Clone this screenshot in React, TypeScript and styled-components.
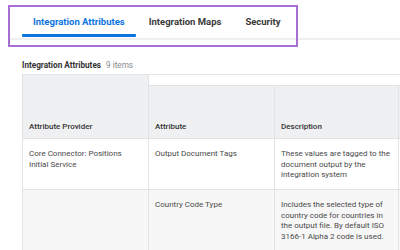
import { createGlobalStyle, styled } from "styled-components";

const GlobalStyle = createGlobalStyle`
  html, body {
    margin: 0;
    padding: 0;
    background: #ffffff;
    font-family: Roboto, "Liberation Sans", Arial, sans-serif;
  }
`;

const Page = styled.div`
  position: relative;
  width: 400px;
  height: 250px;
  overflow: hidden;
`;

const TabBar = styled.div`
  display: flex;
  gap: 2px;
  margin-left: 8px;
  padding: 5px 0 0 14px;
  height: 33px;
  border-bottom: 2px solid #efefef;
`;

const Tab = styled.div<{ $active?: boolean }>`
  position: relative;
  display: flex;
  align-items: center;
  padding: 0 11px 0;
  font-size: 9.5px;
  font-weight: 700;
  color: ${(p) => (p.$active ? "#0a74e0" : "#3a3a3a")};

  &::after {
    content: "";
    position: absolute;
    left: 0;
    right: 0;
    bottom: 1px;
    height: 3px;
    border-radius: 1px;
    background: ${(p) => (p.$active ? "#0a74e0" : "transparent")};
  }
`;

const Highlight = styled.div`
  position: absolute;
  left: 8px;
  top: 5px;
  width: 286px;
  height: 38px;
  border: 2px solid #a86fd3;
  pointer-events: none;
`;

const Section = styled.div`
  padding: 20px 0 0 22px;
`;

const Title = styled.div`
  display: flex;
  align-items: baseline;
  gap: 5px;
  height: 14px;
  font-size: 8.2px;
`;

const TitleText = styled.span`
  font-weight: 700;
  color: #333333;
`;

const Count = styled.span`
  color: #8a8a8a;
`;

const Table = styled.table`
  border-collapse: collapse;
  table-layout: fixed;
  width: 504px;
  font-size: 8px;
  line-height: 10.6px;
`;

const HeadCell = styled.th<{ $band?: boolean }>`
  height: ${(p) => (p.$band ? "11px" : "auto")};
  padding: 0 6px 5px;
  vertical-align: bottom;
  text-align: left;
  font-weight: 500;
  color: #333333;
  background: ${(p) => (p.$band ? "#ffffff" : "#eff0f2")};
  border: 1px solid #e2e3e5;
  box-sizing: border-box;
`;

const Row = styled.tr<{ $shaded?: boolean }>`
  background: ${(p) => (p.$shaded ? "#f7f7f8" : "#ffffff")};
`;

const Cell = styled.td<{ $h: number }>`
  height: ${(p) => p.$h}px;
  padding: 10px 6px 0;
  vertical-align: top;
  color: #4a4a4a;
  border: 1px solid #e2e3e5;
  box-sizing: border-box;
`;

const rows = [
  {
    provider: "Core Connector: Positions Initial Service",
    attribute: "Output Document Tags",
    description: "These values are tagged to the document output by the integration system",
    height: 51,
  },
  {
    provider: "",
    attribute: "Country Code Type",
    description:
      "Includes the selected type of country code for countries in the output file. By default ISO 3166-1 Alpha 2 code is used.",
    height: 64,
  },
];

export default function App() {
  return (
    <Page>
      <GlobalStyle />
      <TabBar>
        <Tab $active>Integration Attributes</Tab>
        <Tab>Integration Maps</Tab>
        <Tab>Security</Tab>
      </TabBar>
      <Highlight />
      <Section>
        <Title>
          <TitleText>Integration Attributes</TitleText>
          <Count>9 items</Count>
        </Title>
        <Table>
          <colgroup>
            <col style={{ width: 126 }} />
            <col style={{ width: 126 }} />
            <col style={{ width: 124 }} />
            <col style={{ width: 128 }} />
          </colgroup>
          <thead>
            <tr>
              <HeadCell rowSpan={2}>Attribute Provider</HeadCell>
              <HeadCell $band colSpan={3} />
            </tr>
            <tr>
              <HeadCell style={{ height: 53 }}>Attribute</HeadCell>
              <HeadCell>Description</HeadCell>
              <HeadCell />
            </tr>
          </thead>
          <tbody>
            {rows.map((r, i) => (
              <Row key={r.attribute} $shaded={i % 2 === 1}>
                <Cell $h={r.height}>{r.provider}</Cell>
                <Cell $h={r.height}>{r.attribute}</Cell>
                <Cell $h={r.height}>{r.description}</Cell>
                <Cell $h={r.height} />
              </Row>
            ))}
          </tbody>
        </Table>
      </Section>
    </Page>
  );
}
